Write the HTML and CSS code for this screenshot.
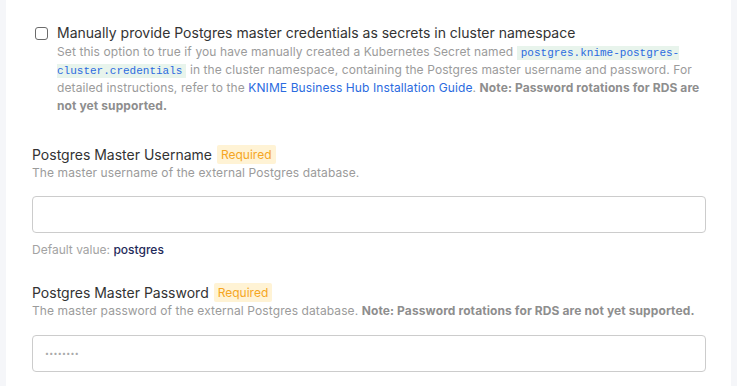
FILE: index.html
```html
<!DOCTYPE html>
<html>
<head>
<meta charset="utf-8">
<link rel="stylesheet" href="styles.css">
</head>
<body>
<div class="panel">
  <div class="check-field">
    <span class="checkbox"></span>
    <div class="check-body">
      <div class="check-title">Manually provide Postgres master credentials as secrets in cluster namespace</div>
      <p class="desc check-desc">Set this option to true if you have manually created a Kubernetes Secret named <code class="chip">postgres.knime-postgres-cluster.credentials</code> in the cluster namespace, containing the Postgres master username and password. For detailed instructions, refer to the <a class="link" href="#">KNIME Business Hub Installation Guide</a>. <strong>Note: Password rotations for RDS are not yet supported.</strong></p>
    </div>
  </div>

  <div class="field field-user">
    <div class="label-row"><span class="label">Postgres Master Username</span><span class="badge">Required</span></div>
    <p class="desc">The master username of the external Postgres database.</p>
    <div class="input"></div>
    <p class="default">Default value: <span class="default-val">postgres</span></p>
  </div>

  <div class="field field-pass">
    <div class="label-row"><span class="label">Postgres Master Password</span><span class="badge">Required</span></div>
    <p class="desc">The master password of the external Postgres database. <strong>Note: Password rotations for RDS are not yet supported.</strong></p>
    <div class="input"><span class="dots">••••••••</span></div>
  </div>
</div>
</body>
</html>
```
FILE: styles.css
```css
html, body {
  margin: 0;
  padding: 0;
}
body {
  background: #f5f6f9;
  font-family: Inter, "Noto Sans", sans-serif;
  height: 386px;
  overflow: hidden;
}
.panel {
  margin-left: 6px;
  width: 725px;
  height: 386px;
  background: #ffffff;
  box-sizing: border-box;
  padding: 23px 25px 0 26px;
}
.check-field {
  display: flex;
  align-items: flex-start;
}
.checkbox {
  width: 13px;
  height: 13px;
  box-sizing: border-box;
  border: 1px solid #6b6b6b;
  border-radius: 3px;
  margin: 4px 0 0 3px;
  flex: none;
}
.check-body {
  margin-left: 9px;
  width: 652px;
}
.check-title {
  font-size: 14px;
  line-height: 20px;
  color: #333333;
}
.desc {
  margin: 0;
  font-size: 12px;
  line-height: 18px;
  color: #9b9b9b;
  letter-spacing: 0.1px;
}
.desc strong {
  color: #8e8e8e;
  font-weight: 700;
}
.chip {
  font-family: "Liberation Mono", "DejaVu Sans Mono", monospace;
  font-size: 11px;
  line-height: 16px;
  letter-spacing: 0;
  color: #2b6be0;
  background: #e8f4ec;
  padding: 1px 4px;
}
.link {
  color: #2b6be0;
  text-decoration: none;
}
.field {
  display: flex;
  flex-direction: column;
}
.field-user {
  margin-top: 30px;
}
.field-pass {
  margin-top: 24px;
}
.label-row {
  display: flex;
  align-items: center;
  height: 19px;
}
.label {
  font-size: 14px;
  color: #333333;
}
.badge {
  margin-left: 5px;
  background: #fff3d5;
  color: #f5a623;
  font-size: 12px;
  line-height: 19px;
  padding: 0 4px;
  border-radius: 2px;
}
.input {
  margin-top: 14px;
  height: 37px;
  box-sizing: border-box;
  border: 1px solid #cccccc;
  border-radius: 4px;
  display: flex;
  align-items: center;
  padding-left: 12px;
}
.field-pass .input {
  margin-top: 15px;
}
.dots {
  font-size: 7px;
  color: #a9a9a9;
  letter-spacing: 0.3px;
}
.default {
  margin: 8px 0 0;
  font-size: 12px;
  line-height: 18px;
  color: #a3a3a3;
}
.default-val {
  color: #1f2a5a;
  font-weight: 500;
}
```
